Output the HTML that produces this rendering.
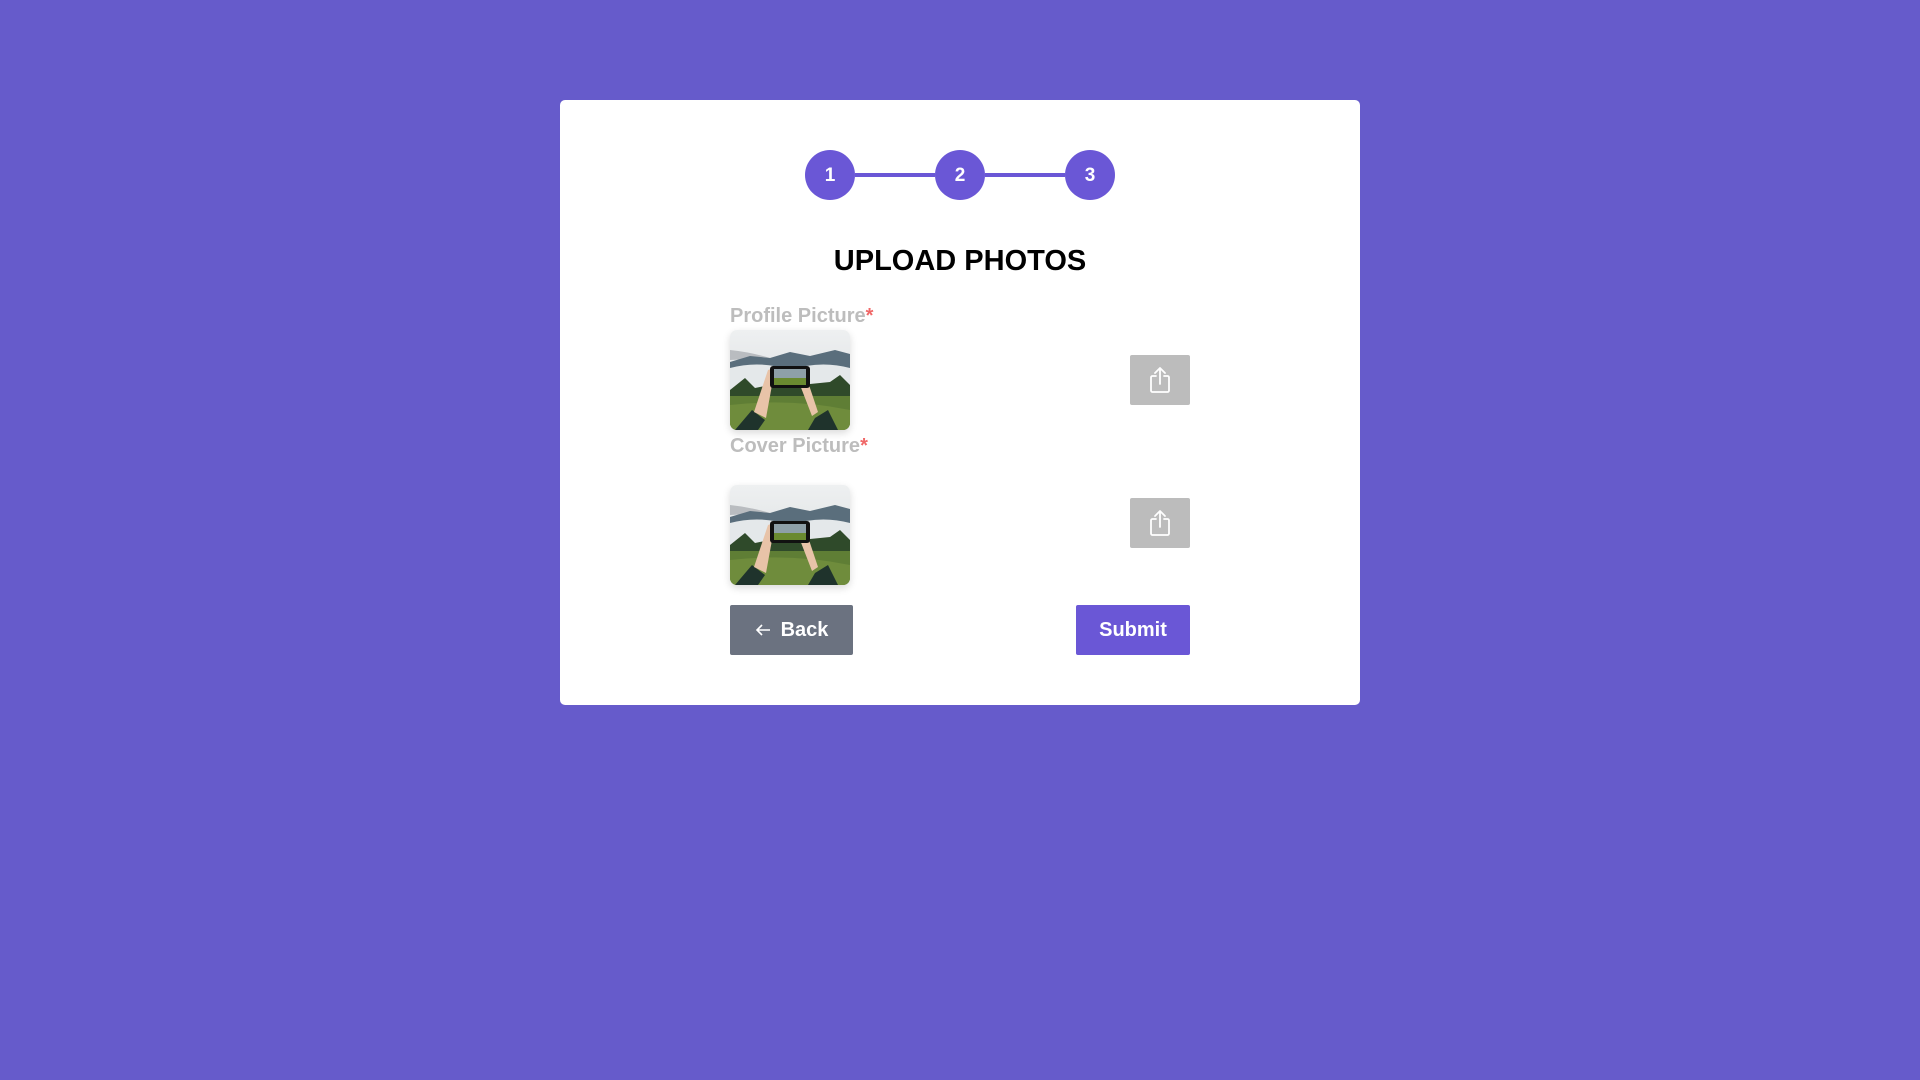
<!DOCTYPE html>
<html><head><meta charset="utf-8"><style>
html,body{margin:0;padding:0;width:1920px;height:1080px;background:#665bcb;font-family:"Liberation Sans",sans-serif;overflow:hidden;position:relative}
.card{position:absolute;left:560px;top:100px;width:800px;height:605px;background:#fff;border-radius:5px}
.c{position:absolute;top:150px;width:50px;height:50px;border-radius:50%;background:#6a57d6;color:#fff;font-size:19px;font-weight:bold;text-align:center;line-height:52px}
.ln{position:absolute;top:173px;height:4px;background:#6a57d6}
.t{position:absolute;left:560px;width:800px;top:245px;text-align:center;font-size:29px;font-weight:bold;color:#000;letter-spacing:0}
.lb{position:absolute;left:730px;font-size:20px;font-weight:bold;color:#bdbdbd}
.lb span{color:#f06868}
.img{position:absolute;left:730px;width:120px;height:100px;border-radius:7px;overflow:hidden;box-shadow:0 3px 8px rgba(0,0,0,0.15)}
.up{position:absolute;left:1130px;width:60px;height:50px;background:#bcbcbc;border-radius:2px}
.up svg{position:absolute;left:19px;top:11px}
.btn{position:absolute;top:605px;height:50px;border-radius:2px;color:#fff;font-size:20px;font-weight:bold;line-height:51px;text-align:center}
</style></head><body>
<svg width="0" height="0" style="position:absolute"><defs>
<symbol id="ph" viewBox="0 0 120 100">
<linearGradient id="sk" x1="0" y1="0" x2="0" y2="1"><stop offset="0" stop-color="#eef0f1"/><stop offset="1" stop-color="#d6dadc"/></linearGradient>
<rect width="120" height="100" fill="url(#sk)"/>
<path d="M0 20 Q20 22 40 28 L0 30Z" fill="#b9bcc0"/>
<path d="M0 32 L20 26 L40 28 L60 22 L80 26 L105 20 L120 24 L120 45 L0 45Z" fill="#5a6e7c"/>
<path d="M0 38 Q30 30 60 40 Q90 30 120 38 L120 60 L0 60Z" fill="#e4e8ea"/>
<path d="M0 60 L15 48 L25 58 L40 55 L60 58 L80 54 L100 52 L110 45 L120 55 L120 70 L0 70Z" fill="#2f4a2a"/>
<rect y="66" width="120" height="34" fill="#5f7e35"/>
<path d="M0 75 Q60 68 120 80 L120 100 L0 100Z" fill="#6f8c3c"/>
<path d="M5 100 L22 80 L35 90 L28 100Z" fill="#1f332c"/>
<path d="M78 100 L85 88 L98 80 L108 100Z" fill="#1f332c"/>
<path d="M24 82 L38 40 L44 38 L42 55 L36 88Z" fill="#e8c3a8"/>
<path d="M88 82 L74 40 L68 38 L70 55 L82 86Z" fill="#e8c3a8"/>
<rect x="40" y="36" width="40" height="22" rx="3" fill="#111"/>
<rect x="44" y="39" width="32" height="16" fill="#8ea0a8"/>
<rect x="44" y="48" width="32" height="7" fill="#6a8a30"/>
</symbol></defs></svg>
<div class="card"></div>
<div class="ln" style="left:855px;width:80px"></div>
<div class="ln" style="left:985px;width:80px"></div>
<div class="c" style="left:805px">1</div>
<div class="c" style="left:935px">2</div>
<div class="c" style="left:1065px">3</div>
<div class="t">UPLOAD PHOTOS</div>
<div class="lb" style="top:305px">Profile Picture<span>*</span></div>
<div class="img" style="top:330px"><svg width="120" height="100"><use href="#ph"/></svg></div>
<div class="up" style="top:355px"><svg width="22" height="28" viewBox="0 0 22 28" fill="none" stroke="#fff" stroke-width="1.8" stroke-linecap="round" stroke-linejoin="round"><path d="M7 10H3.5a1.5 1.5 0 0 0-1.5 1.5v13a1.5 1.5 0 0 0 1.5 1.5h15a1.5 1.5 0 0 0 1.5-1.5v-13A1.5 1.5 0 0 0 18.5 10H15"/><path d="M11 18V2M6 7l5-5 5 5"/></svg></div>
<div class="lb" style="top:435px">Cover Picture<span>*</span></div>
<div class="img" style="top:485px"><svg width="120" height="100"><use href="#ph"/></svg></div>
<div class="up" style="top:498px"><svg width="22" height="28" viewBox="0 0 22 28" fill="none" stroke="#fff" stroke-width="1.8" stroke-linecap="round" stroke-linejoin="round"><path d="M7 10H3.5a1.5 1.5 0 0 0-1.5 1.5v13a1.5 1.5 0 0 0 1.5 1.5h15a1.5 1.5 0 0 0 1.5-1.5v-13A1.5 1.5 0 0 0 18.5 10H15"/><path d="M11 18V2M6 7l5-5 5 5"/></svg></div>
<div class="btn" style="left:730px;width:123px;background:#6b7280"><svg width="16" height="14" viewBox="0 0 16 14" style="vertical-align:-1px;margin-right:10px" fill="none" stroke="#fff" stroke-width="1.6"><path d="M15 7H2M7 2L2 7l5 5"/></svg>Back</div>
<div class="btn" style="left:1076px;width:114px;background:#6a57d6">Submit</div>
</body></html>
